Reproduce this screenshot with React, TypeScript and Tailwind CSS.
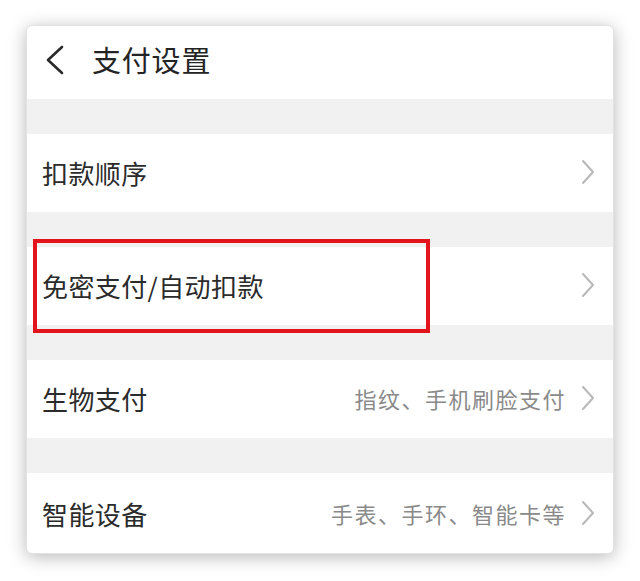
const font = "font-['Noto_Sans_CJK_SC','Noto_Sans',sans-serif]";

type Row = { title: string; note?: string };

const rows: Row[] = [
  { title: "扣款顺序" },
  { title: "免密支付/自动扣款" },
  { title: "生物支付", note: "指纹、手机刷脸支付" },
  { title: "智能设备", note: "手表、手环、智能卡等" },
];

function Chevron() {
  return (
    <svg width="16" height="26" viewBox="0 0 16 26" className="shrink-0">
      <polyline points="3,2 13,13 3,24" fill="none" stroke="#b8b8b8" strokeWidth="2" strokeLinejoin="round" strokeLinecap="round" />
    </svg>
  );
}

function SettingRow({ row, last }: { row: Row; last: boolean }) {
  return (
    <div className={`flex items-center bg-white pl-[15px] pr-[17px] pb-[2px] ${last ? "h-[82px]" : "h-[78px]"}`}>
      <span className="text-[26px] text-[#2b2b2b] tracking-[0.4px]">{row.title}</span>
      <div className="ml-auto flex items-center gap-[14px]">
        {row.note && <span className="text-[22px] text-[#8a8a8a] tracking-[1.5px]">{row.note}</span>}
        <Chevron />
      </div>
    </div>
  );
}

export default function App() {
  return (
    <div className={`w-[640px] h-[581px] bg-white pt-[25px] pl-[26px] ${font}`}>
      <div className="relative w-[588px] h-[529px] rounded-md overflow-hidden bg-[#f1f1f1] border border-[#e2e2e2] shadow-[0_3px_18px_rgba(0,0,0,0.28)]">
        <div className="h-[73px] bg-white flex items-center pl-[17px] pb-[6px]">
          <svg width="22" height="32" viewBox="0 0 22 32">
            <polyline points="18,3 4,16 18,29" fill="none" stroke="#2a2a2a" strokeWidth="2.6" strokeLinejoin="round" strokeLinecap="round" />
          </svg>
          <span className="ml-[26px] text-[29px] text-[#242424] tracking-[0.8px]">支付设置</span>
        </div>
        <div className="flex flex-col gap-[35px] pt-[35px]">
          {rows.map((r, i) => (
            <SettingRow key={r.title} row={r} last={i === rows.length - 1} />
          ))}
        </div>
        <div className="absolute left-[6px] top-[213px] w-[397px] h-[94px] border-4 border-[#e3141c]" />
      </div>
    </div>
  );
}
